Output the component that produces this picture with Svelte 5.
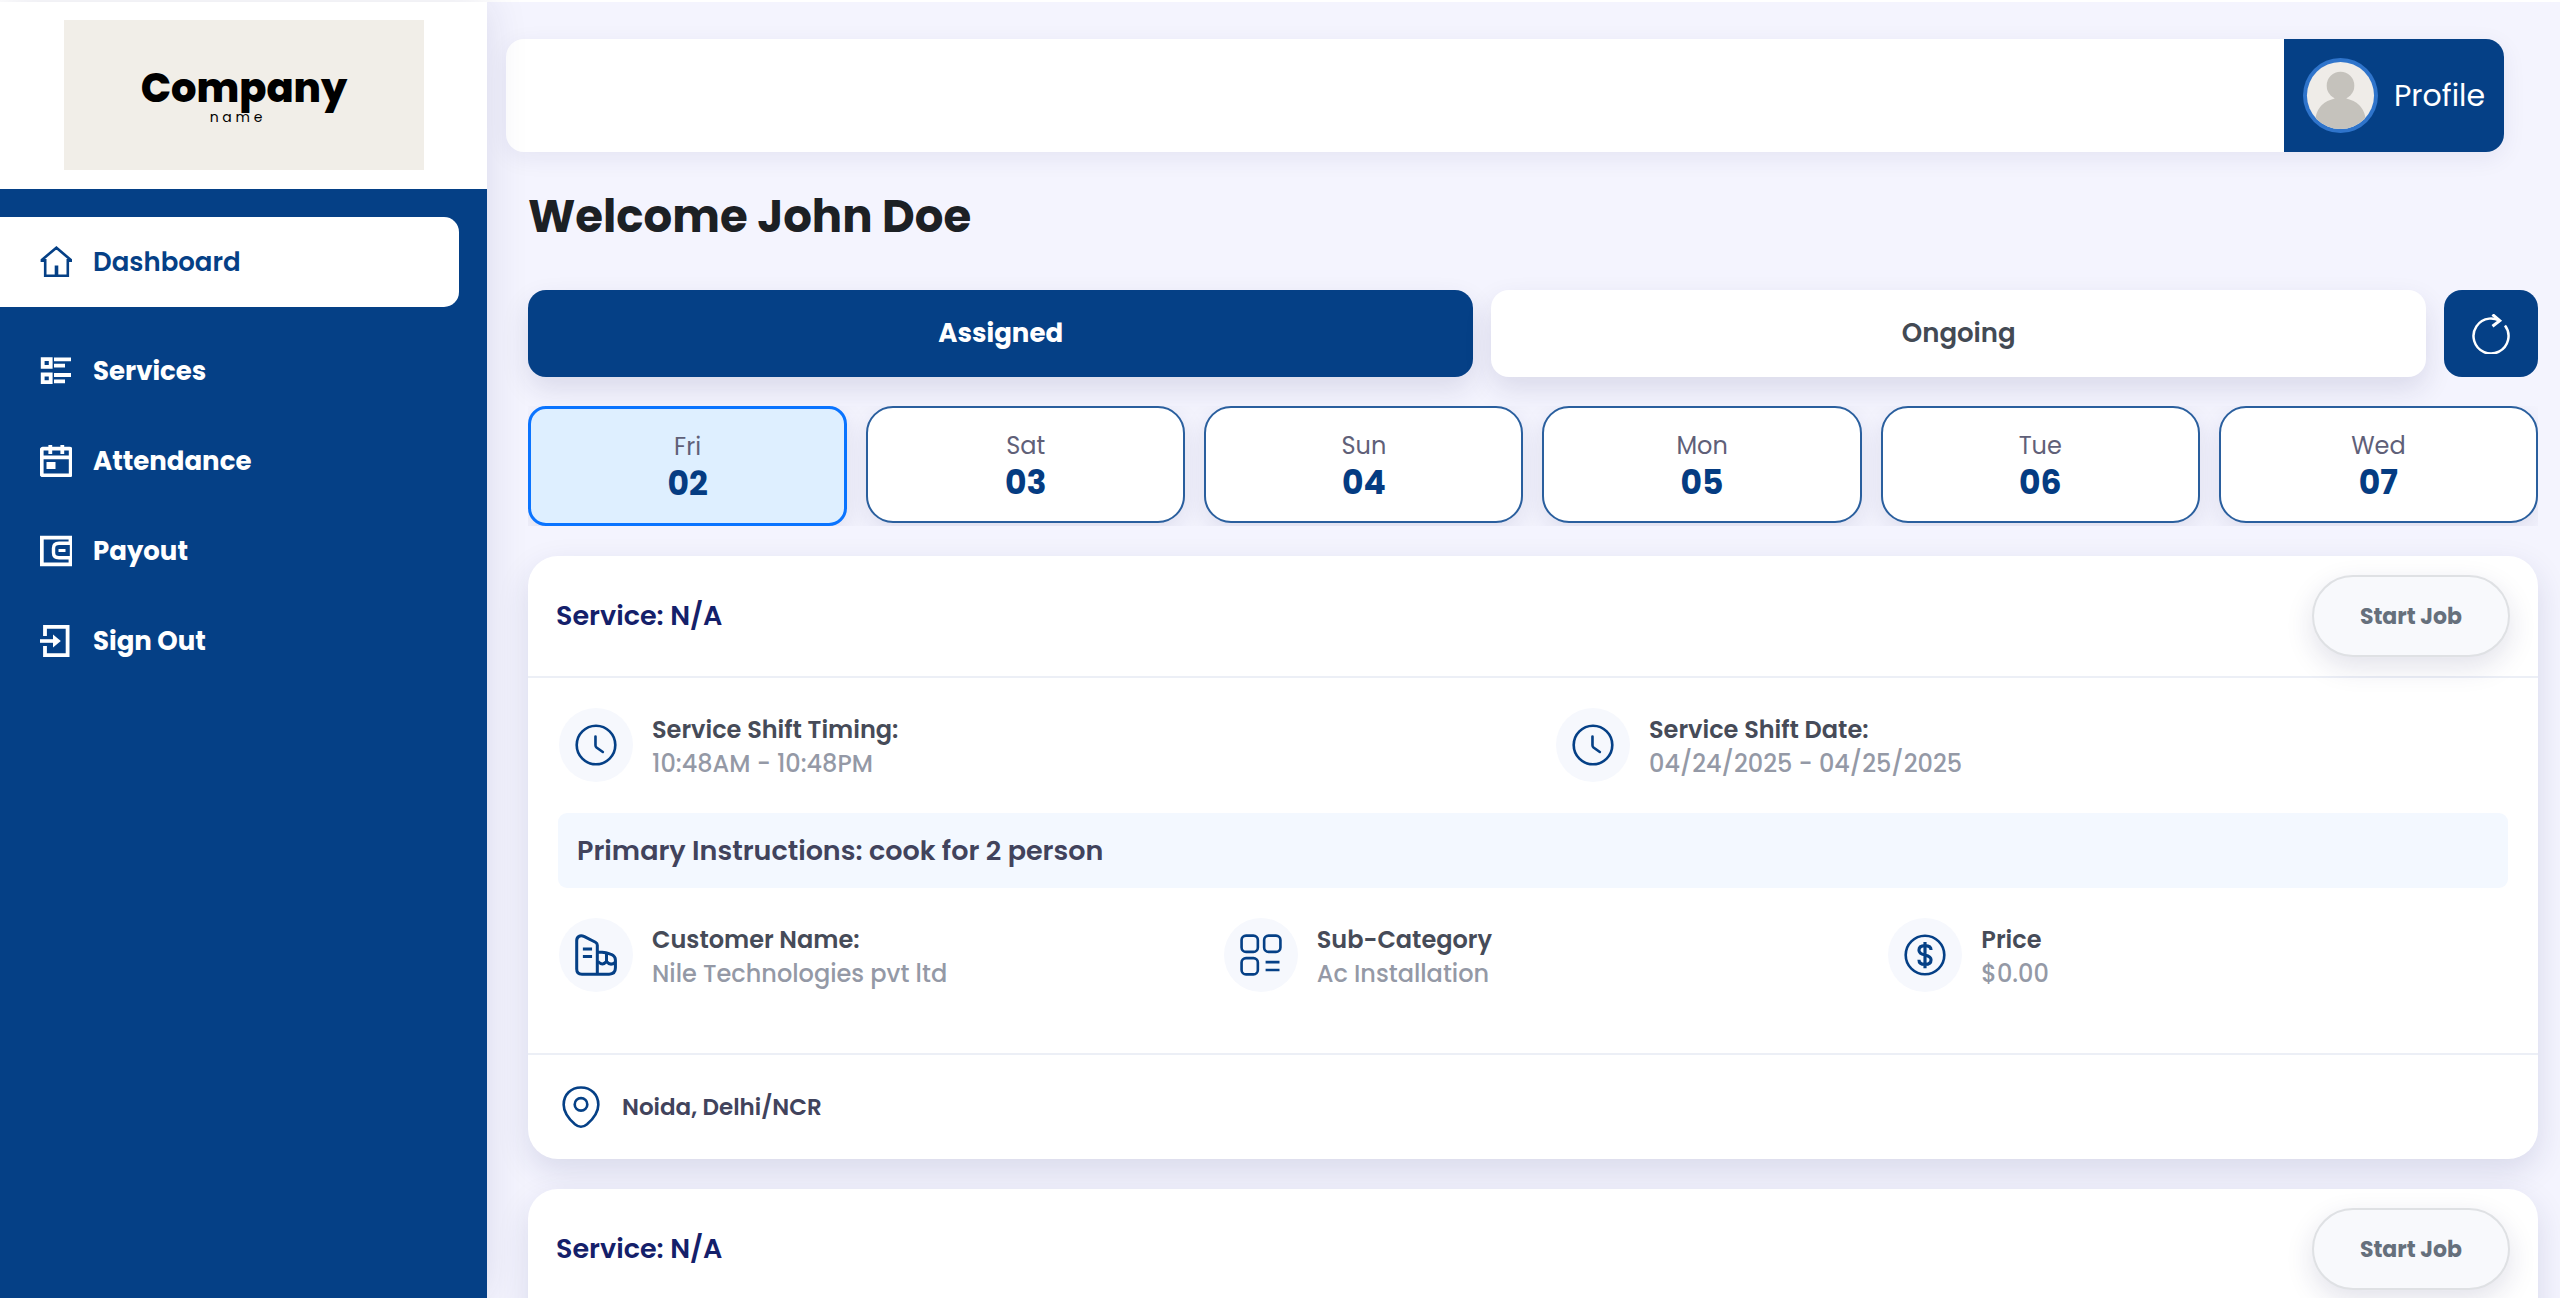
<script>
    let activeTab = 'Assigned';
    let activeDay = '02';

    const menu = [
        { icon: 'home', label: 'Dashboard', active: true },
        { icon: 'list', label: 'Services' },
        { icon: 'calendar', label: 'Attendance' },
        { icon: 'wallet', label: 'Payout' },
        { icon: 'signout', label: 'Sign Out' }
    ];

    const tabs = ['Assigned', 'Ongoing'];

    const days = [
        { name: 'Fri', date: '02' },
        { name: 'Sat', date: '03' },
        { name: 'Sun', date: '04' },
        { name: 'Mon', date: '05' },
        { name: 'Tue', date: '06' },
        { name: 'Wed', date: '07' }
    ];

    const job = {
        service: 'N/A',
        shift: [
            { icon: 'clock', label: 'Service Shift Timing:', value: '10:48AM - 10:48PM' },
            { icon: 'clock', label: 'Service Shift Date:', value: '04/24/2025 - 04/25/2025' }
        ],
        instructions: 'cook for 2 person',
        details: [
            { icon: 'building', label: 'Customer Name:', value: 'Nile Technologies pvt ltd' },
            { icon: 'category', label: 'Sub-Category', value: 'Ac Installation' },
            { icon: 'dollar', label: 'Price', value: '$0.00' }
        ],
        location: 'Noida, Delhi/NCR'
    };

    const jobs = [{ id: 1, ...job }, { id: 2, ...job }];
</script>

{#snippet icon(name)}
    <svg class="icon" viewBox="0 0 32 32" fill="none" stroke="currentColor" stroke-width="2" aria-hidden="true">
        {#if name === 'home'}
            <path d="M5.2 13v16.8h22.6V13M.6 14.6h4M28.4 14.6h4M1.2 14.4 16.4 1.8l15 12.6" stroke-width="2.6" />
            <path d="M16.5 30V19.5" stroke-width="3.6" />
        {:else if name === 'list'}
            <path d="M2.7 4.2h8v7.6h-8zM2.7 19.5h8v7.6h-8z" stroke-width="3.8" />
            <path d="M14 4.4h17M14 10.7h11M14 20h17M14 26.3h11" stroke-width="3.8" />
        {:else if name === 'calendar'}
            <rect x="1.7" y="3.7" width="29" height="26.6" rx="1" stroke-width="3.8" />
            <path d="M2 12.3h28.5M10.3 0v9M22.3 0v9" stroke-width="3.8" />
            <path d="M6.5 17h9v7h-9z" fill="currentColor" stroke="none" />
        {:else if name === 'wallet'}
            <path d="M30.5 8V2.7H1.8v26.6h28.7V24" stroke-width="3.8" />
            <path d="M31.5 8.3H19q-5.5 0-5.5 5v4.4q0 5 5.5 5h12.5z" stroke-width="3.4" />
            <path d="M18.5 15.5h7" stroke-width="3" />
        {:else if name === 'signout'}
            <path d="M5 11V1.8h22.6v28.4H5V21" stroke-width="3.8" />
            <path d="M0 16h14" stroke-width="3.6" />
            <path d="M13 9.5 20.8 16 13 22.5z" fill="currentColor" stroke="none" />
        {:else if name === 'refresh'}
            <path d="M27.2 9.2A14 14 0 1 1 14.5 3.7q4-.4 8 1.3" />
            <path d="m17.2.4 5.8 4.9-5.8 4.5" stroke-width="2.4" />
        {:else if name === 'clock'}
            <circle cx="16" cy="16" r="14.7" />
            <path d="M15.6 9.5v6.7q0 1 .8 1.7l4.8 3.4" stroke-linecap="round" />
        {:else if name === 'building'}
            <g stroke-width="2.3">
                <path d="M17 30.6V8.6q0-1.6-1.4-2.3L7.2 2Q4.6.8 3 1.8 1.3 2.8 1.3 5v21.6q0 4 4 4H26q4.8 0 4.8-4.8V20q0-3-3.2-4.4-3-1.6-10.4-1.9" />
                <path d="M6 11.4h7M6 17.2h7M17.5 21q3.5 3.6 6.5 0v-6M24 21q3 3.6 6.6.6" />
            </g>
        {:else if name === 'category'}
            <rect x="1.2" y="1.2" width="12.4" height="12.4" rx="3.4" />
            <rect x="18.4" y="1.2" width="12.4" height="12.4" rx="3.4" />
            <rect x="1.2" y="18.4" width="12.4" height="12.4" rx="3.4" />
            <path d="M19.5 21.4h10.6M19.5 27.4h10.6" />
        {:else if name === 'dollar'}
            <circle cx="16" cy="16" r="14.7" />
            <path d="M20.6 12.2c0-2.6-2-3.4-4.6-3.4s-4.6 1-4.6 3.5c0 5.1 9.2 2.3 9.2 7.3 0 2.6-2 3.6-4.6 3.6s-4.6-1-4.6-3.6M16 6v20" stroke-width="2.4" />
        {:else if name === 'pin'}
            <path d="M16 1.1c7.6 0 13.2 5.4 13.2 13.1 0 6.1-4.6 11.4-8.6 15-2.8 2.4-6.4 2.4-9.2 0-4-3.6-8.6-8.9-8.6-15C2.8 6.5 8.4 1.1 16 1.1z" />
            <circle cx="16" cy="14" r="4.8" />
        {/if}
    </svg>
{/snippet}

{#snippet info(item)}
    <div class="info">
        <span class="info-icon">{@render icon(item.icon)}</span>
        <div class="info-text">
            <div class="info-label">{item.label}</div>
            <div class="info-value">{item.value}</div>
        </div>
    </div>
{/snippet}

<div class="layout">
    <aside class="sidebar">
        <div class="brand">
            <div class="logo">
                <span class="logo-title">Company</span>
                <span class="logo-sub">n a m e</span>
            </div>
        </div>
        <nav class="menu">
            {#each menu as item}
                <a href="#{item.icon}" class="menu-item" class:active={item.active}>
                    {@render icon(item.icon)}
                    {item.label}
                </a>
            {/each}
        </nav>
    </aside>

    <main class="main">
        <header class="topbar">
            <button class="profile">
                <svg class="avatar" viewBox="0 0 76 76" aria-hidden="true">
                    <clipPath id="face"><circle cx="38" cy="38" r="34" /></clipPath>
                    <circle cx="38" cy="38" r="38" fill="#2f74cb" />
                    <circle cx="38" cy="38" r="34" fill="#efece8" />
                    <g clip-path="url(#face)" fill="#c5c2bc">
                        <circle cx="38" cy="28" r="14" />
                        <path d="M32 36h12v5q16 4 19 18v17H13V59q3-14 19-18z" />
                    </g>
                </svg>
                Profile
            </button>
        </header>

        <div class="content">
            <h1>Welcome John Doe</h1>

            <div class="tabs">
                {#each tabs as tab}
                    <button class="tab" class:active={tab === activeTab} on:click={() => (activeTab = tab)}>{tab}</button>
                {/each}
                <button class="refresh" aria-label="Refresh">{@render icon('refresh')}</button>
            </div>

            <div class="days">
                {#each days as day}
                    <button class="day" class:active={day.date === activeDay} on:click={() => (activeDay = day.date)}>
                        <span class="day-name">{day.name}</span>
                        <span class="day-date">{day.date}</span>
                    </button>
                {/each}
            </div>

            {#each jobs as item (item.id)}
                <section class="card">
                    <div class="card-header">
                        <h2>Service: {item.service}</h2>
                        <button class="start">Start Job</button>
                    </div>
                    <div class="card-body">
                        <div class="row halves">
                            {#each item.shift as entry}
                                {@render info(entry)}
                            {/each}
                        </div>
                        <p class="instructions">Primary Instructions: {item.instructions}</p>
                        <div class="row thirds">
                            {#each item.details as entry}
                                {@render info(entry)}
                            {/each}
                        </div>
                    </div>
                    <div class="card-footer">
                        {@render icon('pin')}
                        {item.location}
                    </div>
                </section>
            {/each}
        </div>
    </main>
</div>

<style>
    :global(body) {
        background: #f4f4fe;
        font-family: Poppins, Inter, 'Open Sans', sans-serif;
    }
    * {
        box-sizing: border-box;
    }
    button {
        border: none;
        padding: 0;
        font-family: inherit;
        cursor: pointer;
    }
    .icon {
        display: block;
        flex: none;
        width: 32px;
        height: 32px;
    }
    .layout {
        display: flex;
        height: 100vh;
        border-top: 2px solid #fff;
    }

    .sidebar {
        position: relative;
        z-index: 1;
        flex: none;
        width: 487px;
        background: #054086;
        box-shadow: 0 0 40px rgba(30, 30, 100, 0.12);
    }
    .brand {
        padding: 18px 63px 19px 64px;
        background: #fff;
    }
    .logo {
        display: flex;
        flex-direction: column;
        align-items: center;
        justify-content: center;
        height: 150px;
        background: #f1eee8;
        color: #000;
    }
    .logo-title {
        font-size: 40px;
        font-weight: 800;
        line-height: 44px;
    }
    .logo-sub {
        padding-right: 16px;
        font-size: 14px;
        line-height: 14px;
    }
    .menu {
        padding: 28px 28px 0 0;
    }
    .menu-item {
        display: flex;
        align-items: center;
        gap: 21px;
        height: 90px;
        padding-left: 40px;
        border-radius: 0 15px 15px 0;
        color: #fff;
        font-size: 26px;
        font-weight: 700;
        text-decoration: none;
    }
    .menu-item.active {
        margin-bottom: 19px;
        background: #fff;
        color: #054086;
        font-weight: 600;
    }

    .main {
        flex: 1;
        min-width: 0;
        overflow-y: auto;
        scrollbar-width: none;
    }
    .topbar {
        display: flex;
        justify-content: flex-end;
        height: 113px;
        margin: 37px 56px 0 19px;
        border-radius: 18px;
        background: #fff;
        box-shadow: 0 6px 24px rgba(30, 30, 100, 0.07);
    }
    .profile {
        display: flex;
        align-items: center;
        gap: 16px;
        padding: 0 19px;
        border-radius: 0 18px 18px 0;
        background: #054086;
        color: #fff;
        font-size: 30px;
    }
    .avatar {
        width: 75px;
        height: 75px;
    }

    .content {
        padding: 35px 22px 30px 41px;
    }
    h1 {
        margin: 0 0 43px;
        color: #1c2024;
        font-size: 45px;
        font-weight: 700;
        line-height: 60px;
    }
    .tabs {
        display: flex;
        gap: 18px;
        margin-bottom: 29px;
    }
    .tab {
        flex: 1 1 auto;
        height: 87px;
        border-radius: 18px;
        background: #fff;
        box-shadow: 0 12px 28px rgba(30, 30, 90, 0.12);
        color: #434a54;
        font-size: 26px;
        font-weight: 600;
    }
    .tab.active {
        background: #054086;
        color: #fff;
        font-weight: 700;
    }
    .refresh {
        display: flex;
        align-items: center;
        justify-content: center;
        width: 94px;
        height: 87px;
        border-radius: 18px;
        background: #054086;
        color: #fff;
    }
    .refresh .icon {
        width: 40px;
        height: 40px;
    }
    .days {
        display: grid;
        grid-template-columns: repeat(6, 1fr);
        gap: 19px;
        align-items: start;
        margin-bottom: 30px;
        overflow: hidden;
    }
    .day {
        display: flex;
        flex-direction: column;
        align-items: center;
        padding: 20px 0 19px;
        border: 2px solid #2a5f9e;
        border-radius: 27px;
        background: #fff;
        box-shadow: 0 8px 24px rgba(30, 30, 90, 0.1);
    }
    .day.active {
        padding: 20px 0;
        border: 3px solid #0a74ff;
        border-radius: 18px;
        background: #deefff;
    }
    .day-name {
        color: #5f6078;
        font-size: 24px;
        line-height: 36px;
    }
    .day-date {
        color: #053c82;
        font-size: 33px;
        font-weight: 700;
        line-height: 38px;
    }

    .card {
        margin-bottom: 30px;
        border-radius: 30px;
        background: #fff;
        box-shadow: 0 12px 32px rgba(30, 40, 100, 0.13);
    }
    .card-header {
        display: flex;
        align-items: center;
        justify-content: space-between;
        padding: 19px 28px;
        border-bottom: 2px solid #eceff6;
    }
    h2 {
        margin: 0;
        color: #14206a;
        font-size: 27px;
        font-weight: 600;
    }
    .start {
        height: 82px;
        padding: 0 46px;
        border: 2px solid #dfe1e4;
        border-radius: 41px;
        background: #f8f9fc;
        box-shadow: 0 10px 28px rgba(30, 30, 90, 0.13);
        color: #66707c;
        font-size: 22px;
        font-weight: 700;
    }
    .card-body {
        padding: 30px 8px 61px;
    }
    .row {
        display: grid;
    }
    .halves {
        grid-template-columns: repeat(2, 1fr);
    }
    .thirds {
        grid-template-columns: repeat(3, 1fr);
    }
    .info {
        display: flex;
        align-items: center;
        gap: 19px;
        padding-left: 23px;
    }
    .info-icon {
        display: flex;
        align-items: center;
        justify-content: center;
        width: 74px;
        height: 74px;
        border-radius: 50%;
        background: #f6f8fd;
        color: #054086;
    }
    .info-icon .icon,
    .card-footer .icon {
        width: 42px;
        height: 42px;
    }
    .info-text {
        padding-top: 4px;
    }
    .info-label {
        color: #464b58;
        font-size: 24px;
        font-weight: 600;
        line-height: 34px;
    }
    .info-value {
        color: #9499a6;
        font-size: 24px;
        font-weight: 500;
        line-height: 34px;
    }
    .instructions {
        margin: 31px 22px 30px;
        padding: 0 19px;
        border-radius: 9px;
        background: #f3f8ff;
        color: #41435c;
        font-size: 27px;
        font-weight: 600;
        line-height: 75px;
    }
    .card-footer {
        display: flex;
        align-items: center;
        gap: 20px;
        height: 106px;
        padding-left: 32px;
        border-top: 2px solid #eceff6;
        color: #41435c;
        font-size: 23px;
        font-weight: 600;
    }
    .card-footer .icon {
        color: #054086;
    }
</style>
